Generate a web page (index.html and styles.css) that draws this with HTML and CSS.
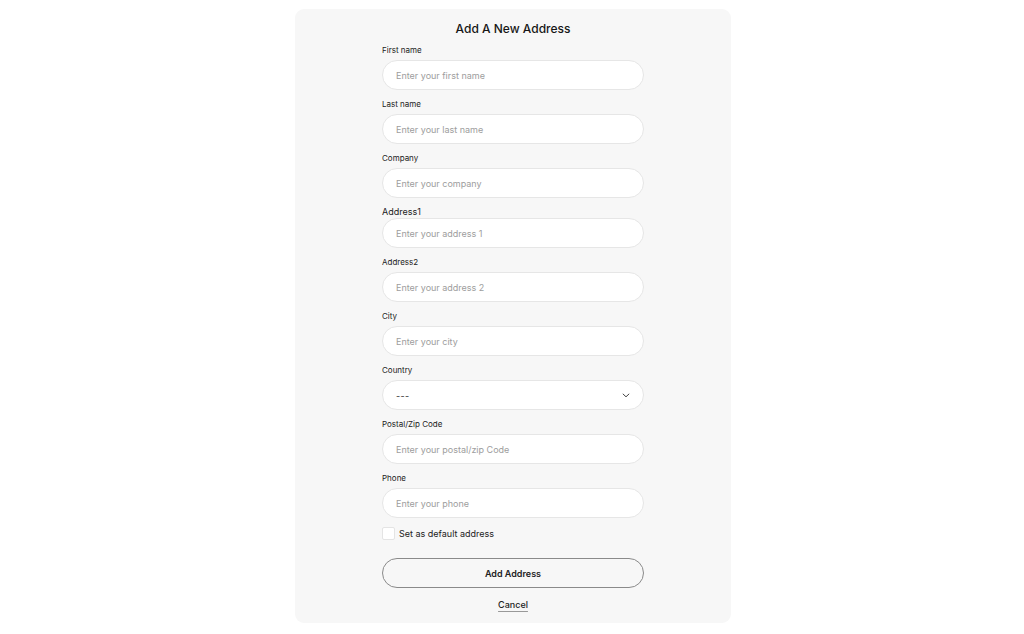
FILE: index.html
```html
<!DOCTYPE html>
<html>
<head>
<meta charset="utf-8">
<link rel="stylesheet" href="styles.css">
</head>
<body>
<div class="card">
  <h1 class="title">Add A New Address</h1>
  <form class="form">
    <div class="field">
      <label class="label">First name</label>
      <div class="input"><span class="ph">Enter your first name</span></div>
    </div>
    <div class="field">
      <label class="label">Last name</label>
      <div class="input"><span class="ph">Enter your last name</span></div>
    </div>
    <div class="field">
      <label class="label">Company</label>
      <div class="input"><span class="ph">Enter your company</span></div>
    </div>
    <div class="field field-tight">
      <label class="label label-lg">Address1</label>
      <div class="input"><span class="ph">Enter your address 1</span></div>
    </div>
    <div class="field">
      <label class="label">Address2</label>
      <div class="input"><span class="ph">Enter your address 2</span></div>
    </div>
    <div class="field">
      <label class="label">City</label>
      <div class="input"><span class="ph">Enter your city</span></div>
    </div>
    <div class="field">
      <label class="label">Country</label>
      <div class="input select"><span class="val">---</span>
        <svg class="chev" width="8" height="5" viewBox="0 0 8 5"><path d="M0.8 0.8 L4 3.8 L7.2 0.8" fill="none" stroke="#444" stroke-width="1"/></svg>
      </div>
    </div>
    <div class="field">
      <label class="label">Postal/Zip Code</label>
      <div class="input"><span class="ph">Enter your postal/zip Code</span></div>
    </div>
    <div class="field">
      <label class="label">Phone</label>
      <div class="input"><span class="ph">Enter your phone</span></div>
    </div>
    <div class="check-row">
      <span class="box"></span>
      <span class="check-label">Set as default address</span>
    </div>
    <div class="btn">Add Address</div>
    <div class="cancel-row"><span class="cancel">Cancel</span></div>
  </form>
</div>
</body>
</html>
```
FILE: styles.css
```css
html, body {
  margin: 0;
  padding: 0;
  background: #ffffff;
  font-family: Inter, "Liberation Sans", sans-serif;
  color: #1f1f1f;
}
.card {
  width: 436px;
  height: 614px;
  box-sizing: border-box;
  margin: 9px 0 0 calc(50% - 217px);
  background: #f7f7f7;
  border-radius: 9px;
  padding-top: 11px;
}
.title {
  margin: 0;
  font-size: 12px;
  line-height: 18px;
  font-weight: 500;
  text-align: center;
  color: #161616;
}
.form {
  width: 262px;
  margin: 6px auto 0;
  display: flex;
  flex-direction: column;
}
.field {
  display: flex;
  flex-direction: column;
  gap: 4px;
  margin-bottom: 8px;
}
.field-tight {
  gap: 0;
}
.label {
  font-size: 8px;
  line-height: 12px;
  color: #222;
}
.label-lg {
  font-size: 9px;
}
.input {
  height: 30px;
  box-sizing: border-box;
  background: #fff;
  border: 1px solid #e6e6e6;
  border-radius: 15px;
  display: flex;
  align-items: center;
  padding: 0 13px;
}
.ph {
  font-size: 9px;
  color: #9d9d9d;
}
.select {
  justify-content: space-between;
  padding-right: 13px;
}
.val {
  font-size: 9px;
  color: #333;
  letter-spacing: 0.3px;
}
.check-row {
  display: flex;
  align-items: center;
  gap: 4px;
  margin-top: 1px;
  height: 13px;
}
.box {
  width: 13px;
  height: 13px;
  box-sizing: border-box;
  background: #fff;
  border: 1px solid #e4e4e4;
  border-radius: 2px;
}
.check-label {
  font-size: 9px;
  color: #222;
}
.btn {
  margin-top: 18px;
  height: 30px;
  box-sizing: border-box;
  border: 1px solid #8a8a8a;
  border-radius: 15px;
  display: flex;
  align-items: center;
  justify-content: center;
  font-size: 9px;
  font-weight: 600;
  color: #222;
}
.cancel-row {
  margin-top: 8px;
  text-align: center;
  line-height: 12px;
}
.cancel {
  font-size: 9px;
  font-weight: 500;
  color: #222;
  text-decoration: underline;
  text-decoration-color: #999;
  text-underline-offset: 3px;
}
```
